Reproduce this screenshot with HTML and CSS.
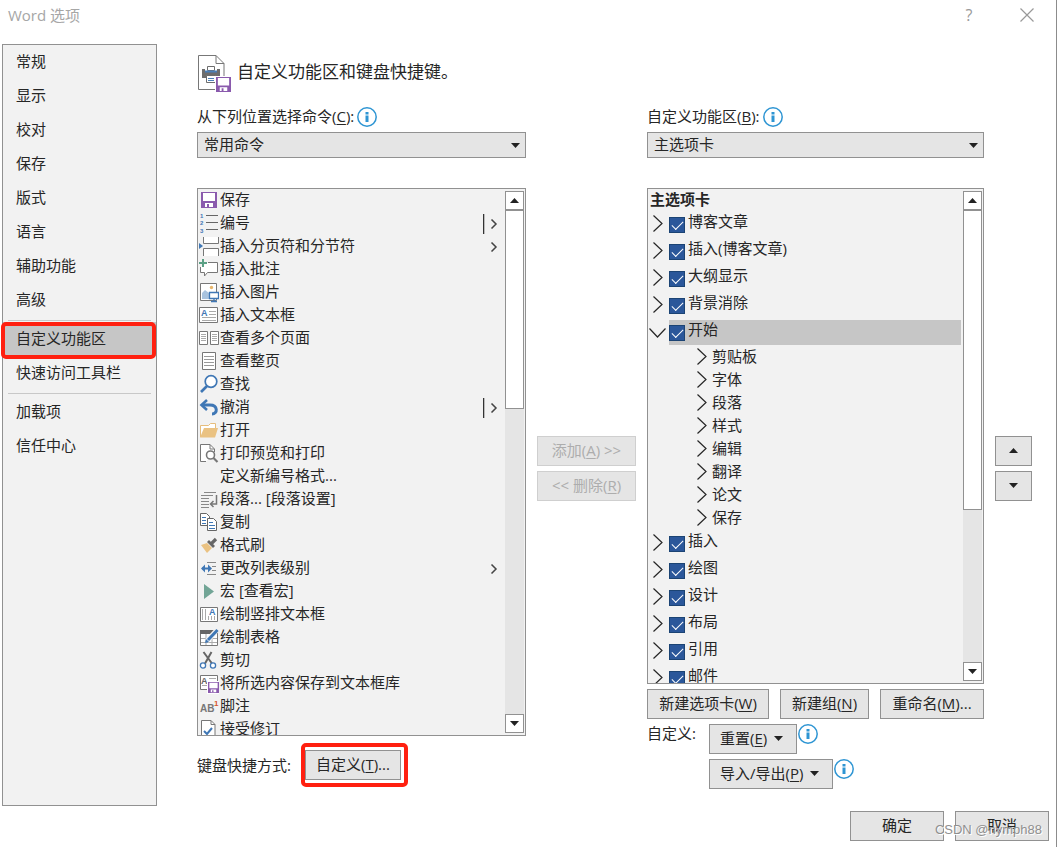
FILE: index.html
```html
<!DOCTYPE html>
<html lang="zh-CN">
<head>
<meta charset="utf-8">
<title>Word 选项</title>
<link rel="stylesheet" href="styles.css">
</head>
<body>
<svg class="sprite" aria-hidden="true">
  <symbol id="save" viewBox="0 0 16 16"><path fill="#8a5aad" d="M0 0h16v16H0z"/><path fill="#fff" d="M2 1h12v8H2zM4 11h8v4H4z"/><path fill="#8a5aad" d="M6 12h2v3H6z"/></symbol>
  <symbol id="info" viewBox="0 0 20 20"><circle cx="10" cy="10" r="9.2" fill="#fff" stroke="#2e95d3" stroke-width="1.5"/><path fill="#2e95d3" d="M8.5 5h3v2.4h-3zM8.5 8.6h3V15h-3z"/></symbol>
  <symbol id="more" viewBox="0 0 8 10"><path d="M1.5.5 6 5 1.5 9.500" fill="none" stroke="#444" stroke-width="1.5"/></symbol>
  <symbol id="closed" viewBox="0 0 10 17"><path d="M.5.5 9 8.500.5 16.500" fill="none" stroke="#262626" stroke-width="1.2"/></symbol>
  <symbol id="open" viewBox="0 0 17 10"><path d="M.5.5 8.500 9 16.500.5" fill="none" stroke="#262626" stroke-width="1.2"/></symbol>
  <symbol id="down" viewBox="0 0 9 5"><path d="M0 0h9L4.500 5z" fill="#222"/></symbol>
  <symbol id="up" viewBox="0 0 9 5"><path d="M0 5h9L4.500 0z" fill="#222"/></symbol>
</svg>
<div class="dialog">
  <header class="titlebar">
    <h1 class="title">Word 选项</h1>
    <button class="tool help" aria-label="帮助">?</button>
    <button class="tool close" aria-label="关闭"><svg width="14" height="14" viewBox="0 0 14 14"><path d="M.5.5l13 13M13.500.5l-13 13" stroke="#999" stroke-width="1.2"/></svg></button>
  </header>
  <div class="body">
    <nav class="sidebar">
      <button class="nav">常规</button>
      <button class="nav">显示</button>
      <button class="nav">校对</button>
      <button class="nav">保存</button>
      <button class="nav">版式</button>
      <button class="nav">语言</button>
      <button class="nav">辅助功能</button>
      <button class="nav">高级</button>
      <hr class="rule">
      <button class="nav current">自定义功能区</button>
      <button class="nav">快速访问工具栏</button>
      <hr class="rule">
      <button class="nav">加载项</button>
      <button class="nav">信任中心</button>
    </nav>
    <main class="main">
      <div class="heading">
        <svg width="34" height="38" viewBox="0 0 34 38">
          <path d="M.5.500H18l8 8V34.500H.500z" fill="#fff" stroke="#777"/><path d="M18 .5v8h8" fill="none" stroke="#777"/>
          <path d="M4 14h3v3h12v-3h3v9H4z" fill="#6d6d6d"/><path d="M9.500 11.500h7v4h-7z" fill="#fff" stroke="#6d6d6d"/><path d="M7 16.500h12" stroke="#4a7fb8" stroke-width="2"/>
          <path d="M8.500 20.500h9v7h-9z" fill="#fff" stroke="#6d6d6d"/><path d="M10 23.500h6M10 25.500h6" stroke="#4a7fb8"/>
          <path d="M17 21h17v17H17z" fill="#fff"/><use href="#save" x="18" y="22" width="15" height="15"/>
        </svg>
        <h2 class="heading-text">自定义功能区和键盘快捷键。</h2>
      </div>
      <div class="columns">
        <section class="col">
          <div class="field"><label for="from">从下列位置选择命令(<u>C</u>):</label><svg class="info"><use href="#info"/></svg></div>
          <div class="select"><select id="from"><option>常用命令</option></select><svg class="tri"><use href="#down"/></svg></div>
          <div class="list">
            <ul class="items">
              <li class="cmd"><svg class="ico" viewBox="0 0 20 21"><use href="#save" x="2" y="2" width="16" height="16"/></svg>保存</li>
              <li class="cmd"><svg class="ico" viewBox="0 0 20 21"><path d="M7 2.500h12M7 9.500h12M7 16.500h12" stroke="#666"/><g class="digits"><text x="1" y="5">1</text><text x="1" y="12">2</text><text x="1" y="20">3</text></g></svg>编号<span class="split"></span><svg class="more"><use href="#more"/></svg></li>
              <li class="cmd"><svg class="ico" viewBox="0 0 20 21"><path d="M4.500 1v6.500h15V1M4.500 20v-7.500h15V20" fill="#fff" stroke="#777"/><path d="M0 7l4 3-4 3z" fill="#3f77b5"/></svg>插入分页符和分节符<svg class="more"><use href="#more"/></svg></li>
              <li class="cmd"><svg class="ico" viewBox="0 0 20 21"><path d="M9 3.500h9.500v10H8.500l-3 3.500v-3.500h-4V8" fill="#fff" stroke="#777"/><path d="M4 0v8M0 4h8" stroke="#5ba085" stroke-width="2"/></svg>插入批注</li>
              <li class="cmd"><svg class="ico" viewBox="0 0 20 21"><path d="M1.500 1.500h16v17h-16z" fill="#fff" stroke="#777"/><path d="M3 17v-6l3-3 4 3v6z" fill="#a9c3de"/><circle cx="12.500" cy="5.500" r="1.700" fill="#e8b66b"/><path d="M10.500 10.500h9v6h-9zM15 16.500v3M12 19.500h6" fill="#fff" stroke="#3f77b5" stroke-width="1.300"/></svg>插入图片</li>
              <li class="cmd"><svg class="ico" viewBox="0 0 20 21"><path d="M.5 2.500h18v15H.500z" fill="#fff" stroke="#777"/><path d="M10 6.500h7M10 9.500h7M3 12.500h14M3 15.500h14" stroke="#aaa"/><text class="glyph blue" x="2" y="11">A</text></svg>插入文本框</li>
              <li class="cmd"><svg class="ico" viewBox="0 0 20 21"><path d="M.5 3.500h8v13h-8zM11.500 3.500h8v13h-8z" fill="#fff" stroke="#777"/><path d="M2 6.500h5M2 8.500h5M2 10.500h5M2 12.500h5M13 6.500h5M13 8.500h5M13 10.500h5M13 12.500h5" stroke="#aaa"/></svg>查看多个页面</li>
              <li class="cmd"><svg class="ico" viewBox="0 0 20 21"><path d="M3.500 1.500h13v17h-13z" fill="#fff" stroke="#777"/><path d="M5 5.500h10M5 8.500h10M5 11.500h10M5 14.500h10" stroke="#999"/></svg>查看整页</li>
              <li class="cmd"><svg class="ico" viewBox="0 0 20 21"><circle cx="12" cy="7.500" r="5.800" fill="#fff" stroke="#3f77b5" stroke-width="1.700"/><path d="M8 12l-6 6" stroke="#3f77b5" stroke-width="2.600"/></svg>查找</li>
              <li class="cmd"><svg class="ico" viewBox="0 0 20 21"><path d="M3 8h8c8 0 8 9 2 9" fill="none" stroke="#3f77b5" stroke-width="3"/><path d="M8 3L2.500 8 8 13" fill="none" stroke="#3f77b5" stroke-width="2.600"/></svg>撤消<span class="split"></span><svg class="more"><use href="#more"/></svg></li>
              <li class="cmd"><svg class="ico" viewBox="0 0 20 21"><path d="M1.500 17V5.500h8l2-2h5V8" fill="#fff" stroke="#e6bd7c"/><path d="M1 17.500L5 8h14l-3 9.500z" fill="#eac282"/></svg>打开</li>
              <li class="cmd"><svg class="ico" viewBox="0 0 20 21"><path d="M7 18.500H1.500v-17H11l4.500 4.500v3" fill="#fff" stroke="#777"/><path d="M11 1.500V6h4" fill="none" stroke="#777"/><circle cx="11.500" cy="12" r="4" fill="#fff" stroke="#777" stroke-width="1.600"/><path d="M14.500 15l4 4" stroke="#777" stroke-width="2.200"/></svg>打印预览和打印</li>
              <li class="cmd"><span class="ico"></span>定义新编号格式...</li>
              <li class="cmd"><svg class="ico" viewBox="0 0 20 21"><path d="M5 3.500h12M2 6.500h12M2 9.500h8M2 12.500h8M2 15.500h8M2 18.500h8" stroke="#888"/><path d="M17.500 6v9h-6M14.500 12l-3 3 3 3" fill="none" stroke="#777" stroke-width="1.500"/></svg>段落... [段落设置]</li>
              <li class="cmd"><svg class="ico" viewBox="0 0 20 21"><path d="M1.500 1.500h6l3 3v9h-9z" fill="#fff" stroke="#666"/><path d="M3 5.500h4M3 8.500h4M3 11.500h4" stroke="#3f77b5"/><path d="M8.500 6.500h6l3 3v9h-9z" fill="#fff" stroke="#666"/><path d="M10 10.500h4M10 13.500h6M10 16.500h6" stroke="#3f77b5"/></svg>复制</li>
              <li class="cmd"><svg class="ico" viewBox="0 0 20 21"><path d="M2 10l6-2 5 5-5 5z" fill="#eac282"/><path d="M8 7l2-2 6 6-2 2z" fill="#666"/><path d="M12 9l5-5" stroke="#666" stroke-width="3.200"/></svg>格式刷</li>
              <li class="cmd"><svg class="ico" viewBox="0 0 20 21"><path d="M8 4.500h9M13 8.500h4M13 12.500h4M8 16.500h9" stroke="#888"/><path d="M3 10.500h8" stroke="#3f77b5" stroke-width="2"/><path d="M6 6.500l-4 4 4 4zM9 6.500l4 4-4 4z" fill="#3f77b5"/></svg>更改列表级别<svg class="more"><use href="#more"/></svg></li>
              <li class="cmd"><svg class="ico" viewBox="0 0 20 21"><path d="M5 3l10 7.500L5 18z" fill="#72a596"/></svg>宏 [查看宏]</li>
              <li class="cmd"><svg class="ico" viewBox="0 0 20 21"><path d="M1.500 3.500h17v14h-17z" fill="#fff" stroke="#777"/><path d="M3.500 5v11M6.500 5v11M9.500 12v4M12.500 12v4M15.500 12v4" stroke="#aaa"/><text class="glyph blue" x="10" y="11">A</text></svg>绘制竖排文本框</li>
              <li class="cmd"><svg class="ico" viewBox="0 0 20 21"><path d="M1.500 3.500h17v15h-17z" fill="#fff" stroke="#777"/><path d="M1 3h18v4H1z" fill="#666"/><path d="M7 7v11M13 7v11M2 11.500h16M2 15.500h16" stroke="#aaa"/><path d="M8 14L18 3" stroke="#f3f3f3" stroke-width="5"/><path d="M9 13L18.500 3" stroke="#3f77b5" stroke-width="3"/><path d="M6 16l1-4 3 3z" fill="#3f77b5"/></svg>绘制表格</li>
              <li class="cmd"><svg class="ico" viewBox="0 0 20 21"><path d="M4.500 2L13 13.500M12.500 2L6 13.500" stroke="#666" stroke-width="2"/><circle cx="4" cy="15.500" r="2.600" fill="#fff" stroke="#3f77b5" stroke-width="1.300"/><circle cx="14" cy="15.500" r="2.600" fill="#fff" stroke="#3f77b5" stroke-width="1.300"/></svg>剪切</li>
              <li class="cmd"><svg class="ico" viewBox="0 0 20 21"><path d="M1.500 2.500h17v14h-17z" fill="#fff" stroke="#777"/><path d="M10 5.500h7M10 8.500h7M3 12.500h14" stroke="#aaa"/><text class="glyph gray" x="2" y="11">A</text><path d="M8 8h12v13H8z" fill="#fff"/><use href="#save" x="9" y="9" width="11" height="11"/></svg>将所选内容保存到文本框库</li>
              <li class="cmd"><svg class="ico" viewBox="0 0 20 21"><text class="ab" x="1" y="16">AB</text><text class="one" x="15" y="10">1</text></svg>脚注</li>
              <li class="cmd"><svg class="ico" viewBox="0 0 20 21"><path d="M2.500 1.500H12l4 4v14H2.500z" fill="#fff" stroke="#777"/><path d="M12 1.500v4h4" fill="none" stroke="#777"/><path d="M5 12l3 3 5-6" fill="none" stroke="#3f77b5" stroke-width="2"/></svg>接受修订</li>
            </ul>
            <div class="scroll"><button class="sbtn" aria-label="向上"><svg class="tri"><use href="#up"/></svg></button><div class="track"><div class="thumb commands"></div></div><button class="sbtn" aria-label="向下"><svg class="tri"><use href="#down"/></svg></button></div>
          </div>
          <div class="shortcut"><span>键盘快捷方式:</span><span class="marked"><button class="btn">自定义(<u>T</u>)...</button></span></div>
        </section>
        <div class="stack transfer">
          <button class="btn" disabled>添加(<u>A</u>) &gt;&gt;</button>
          <button class="btn" disabled>&lt;&lt; 删除(<u>R</u>)</button>
        </div>
        <section class="col">
          <div class="field"><label for="tabs">自定义功能区(<u>B</u>):</label><svg class="info"><use href="#info"/></svg></div>
          <div class="select"><select id="tabs"><option>主选项卡</option></select><svg class="tri"><use href="#down"/></svg></div>
          <div class="list">
            <div class="items tree">
              <div class="tree-title">主选项卡</div>
              <div class="tab"><svg class="chev"><use href="#closed"/></svg><label class="check"><input type="checkbox" checked>博客文章</label></div>
              <div class="tab"><svg class="chev"><use href="#closed"/></svg><label class="check"><input type="checkbox" checked>插入(博客文章)</label></div>
              <div class="tab"><svg class="chev"><use href="#closed"/></svg><label class="check"><input type="checkbox" checked>大纲显示</label></div>
              <div class="tab"><svg class="chev"><use href="#closed"/></svg><label class="check"><input type="checkbox" checked>背景消除</label></div>
              <div class="tab"><svg class="chev opened"><use href="#open"/></svg><label class="check selected"><input type="checkbox" checked>开始</label></div>
              <div class="group"><svg class="chev"><use href="#closed"/></svg>剪贴板</div>
              <div class="group"><svg class="chev"><use href="#closed"/></svg>字体</div>
              <div class="group"><svg class="chev"><use href="#closed"/></svg>段落</div>
              <div class="group"><svg class="chev"><use href="#closed"/></svg>样式</div>
              <div class="group"><svg class="chev"><use href="#closed"/></svg>编辑</div>
              <div class="group"><svg class="chev"><use href="#closed"/></svg>翻译</div>
              <div class="group"><svg class="chev"><use href="#closed"/></svg>论文</div>
              <div class="group"><svg class="chev"><use href="#closed"/></svg>保存</div>
              <div class="tab"><svg class="chev"><use href="#closed"/></svg><label class="check"><input type="checkbox" checked>插入</label></div>
              <div class="tab"><svg class="chev"><use href="#closed"/></svg><label class="check"><input type="checkbox" checked>绘图</label></div>
              <div class="tab"><svg class="chev"><use href="#closed"/></svg><label class="check"><input type="checkbox" checked>设计</label></div>
              <div class="tab"><svg class="chev"><use href="#closed"/></svg><label class="check"><input type="checkbox" checked>布局</label></div>
              <div class="tab"><svg class="chev"><use href="#closed"/></svg><label class="check"><input type="checkbox" checked>引用</label></div>
              <div class="tab"><svg class="chev"><use href="#closed"/></svg><label class="check"><input type="checkbox" checked>邮件</label></div>
            </div>
            <div class="scroll"><button class="sbtn" aria-label="向上"><svg class="tri"><use href="#up"/></svg></button><div class="track"><div class="thumb tabs"></div></div><button class="sbtn" aria-label="向下"><svg class="tri"><use href="#down"/></svg></button></div>
          </div>
          <div class="actions">
            <button class="btn">新建选项卡(<u>W</u>)</button>
            <button class="btn">新建组(<u>N</u>)</button>
            <button class="btn">重命名(<u>M</u>)...</button>
          </div>
          <div class="custom">
            <span class="custom-label">自定义:</span>
            <div class="custom-buttons">
              <div class="menu"><button class="btn"><span>重置(<u>E</u>)</span><svg class="tri"><use href="#down"/></svg></button><svg class="info"><use href="#info"/></svg></div>
              <div class="menu"><button class="btn"><span>导入/导出(<u>P</u>)</span><svg class="tri"><use href="#down"/></svg></button><svg class="info"><use href="#info"/></svg></div>
            </div>
          </div>
        </section>
        <div class="stack">
          <button class="btn" aria-label="上移"><svg class="tri"><use href="#up"/></svg></button>
          <button class="btn" aria-label="下移"><svg class="tri"><use href="#down"/></svg></button>
        </div>
      </div>
    </main>
  </div>
  <footer class="footer">
    <button class="btn">确定</button>
    <button class="btn">取消</button>
    <span class="watermark">CSDN @nymph88</span>
  </footer>
</div>
</body>
</html>
```
FILE: styles.css
```css
* { box-sizing: border-box; }
body { margin: 0; background: #fff; color: #262626; font: 15px/23px "Open Sans", "Noto Sans CJK SC", sans-serif; }
button, select, input { font: inherit; color: inherit; margin: 0; }
h1, h2, ul { margin: 0; padding: 0; font-weight: 400; list-style: none; }
svg { display: block; flex: none; }
u { text-underline-offset: 2px; text-decoration-thickness: 1px; }
.sprite { position: absolute; width: 0; height: 0; }

.dialog { display: flex; flex-direction: column; height: 100vh; min-height: 640px; padding-bottom: 6px; border-right: 1px solid #8c8c8c; }
.titlebar { display: flex; align-items: center; height: 44px; padding: 0 22px 14px 8px; }
.title { flex: 1; font-size: 15px; color: #a6a6a6; }
.tool { display: flex; align-items: center; justify-content: center; padding: 0; border: 0; background: none; color: #999; }
.help { width: 20px; margin-right: 41px; font-size: 16px; }

.body { display: flex; flex: 1; min-height: 0; padding-left: 2px; }
.sidebar { flex: none; width: 155px; border: 1px solid #919191; background: #f2f2f2; }
.nav { display: block; position: relative; width: 100%; height: 34px; padding: 0 13px 2px; border: 0; background: none; text-align: left; }
.rule { height: 1px; margin: 3px 5px 1px; border: 0; background: #c8c8c8; }
.current { background: #c6c6c6; }
.current::after, .marked::after { content: ""; position: absolute; border: 4px solid #ff2010; border-radius: 5px; pointer-events: none; }
.current::after { inset: 0 0 -3px -2px; }

.main { display: flex; flex-direction: column; flex: 1; min-width: 0; padding: 10px 24px 0 40px; }
.heading { display: flex; align-items: flex-start; gap: 5px; height: 53px; padding: 1px; }
.heading-text { font-size: 17px; line-height: 34px; }
.columns { display: grid; grid-template-columns: 329fr 99px 337fr 37px; gap: 11px; flex: 1; min-height: 0; }
.col { display: flex; flex-direction: column; min-width: 0; min-height: 0; }
.field { display: flex; align-items: center; gap: 3px; height: 20px; margin-bottom: 5px; }
.field label { padding-bottom: 2px; }
.info { width: 20px; height: 20px; overflow: visible; }
.tri { width: 9px; height: 5px; }
.select { display: grid; align-items: center; flex: none; height: 26px; margin-bottom: 30px; }
.select select { grid-area: 1 / 1; width: 100%; height: 26px; padding: 0 6px 2px; border: 1px solid #919191; border-radius: 0; background: #e5e5e5; appearance: none; line-height: 22px; }
.select .tri { grid-area: 1 / 1; justify-self: end; margin-right: 6px; pointer-events: none; }

.list { display: flex; flex: 1; min-height: 0; border: 1px solid #919191; background: #f2f2f2; }
.items { flex: 1; min-width: 0; overflow: hidden; }
.cmd { display: flex; height: 23px; padding: 0 7px 0 1px; line-height: 21px; white-space: nowrap; }
.ico { width: 20px; height: 21px; margin: 1px 1px 0 0; }
.more { align-self: center; width: 8px; height: 10px; margin-left: auto; }
.split { align-self: center; width: 2px; height: 20px; margin-left: auto; border-left: 1px solid #333; background: #bbb; }
.split + .more { margin-left: 5px; }
.digits { font: bold 6px "Liberation Sans", sans-serif; fill: #3f77b5; }
.glyph { font: bold 9px "Liberation Sans", sans-serif; }
.blue { fill: #3f77b5; }
.gray { fill: #666; }
.ab { font: bold 10px "Liberation Sans", sans-serif; fill: #777; }
.one { font: bold 8px "Liberation Sans", sans-serif; fill: #d8552f; }

.scroll { display: flex; flex-direction: column; width: 19px; margin: 2px 1px 2px 0; background: #e5e5e5; }
.sbtn { display: flex; align-items: center; justify-content: center; flex: none; height: 19px; padding: 0; border: 1px solid #919191; background: #fff; }
.track { flex: 1; min-height: 0; }
.thumb { border: 1px solid #919191; background: #fff; }
.commands { height: 39.5%; }
.tabs { height: 66.3%; }

.shortcut { display: flex; align-items: center; gap: 14px; height: 30px; margin: 14px 0 26px; }
.marked { display: flex; position: relative; }
.marked::after { inset: -7px -7px -7px -4px; }
.btn { display: inline-flex; align-items: center; justify-content: center; height: 30px; padding: 0 10px 2px; border: 1px solid #919191; background: #e5e5e5; white-space: pre; }
.btn:disabled { color: #adadad; border-color: #cfcfcf; }
.stack { display: flex; flex-direction: column; gap: 5px; justify-content: center; padding-top: 24px; }
.stack .btn { padding: 0 0 1px; }

.tree-title { height: 21px; padding-left: 2px; line-height: 21px; font-weight: 700; }
.tab { display: flex; height: 25px; margin: 2px 2px 0 0; }
.chev { width: 10px; height: 17px; }
.tab .chev { margin: 3px 6px 0 5px; }
.tab .opened { width: 17px; height: 10px; margin: 8px 3px 0 1px; }
.check { display: flex; flex: 1; gap: 3px; line-height: 19px; }
.check input { appearance: none; flex: none; width: 16px; height: 16px; margin-top: 5px; border: 1px solid #1c4474; background: #2b579a; display: grid; place-items: center; }
.check input:checked::before { content: ""; width: 10px; height: 5px; margin-bottom: 2px; border: solid #fff; border-width: 0 0 1px 1px; rotate: -45deg; }
.selected { background: #c6c6c6; }
.group { display: flex; align-items: center; gap: 5px; height: 23px; padding-left: 49px; }

.actions { display: grid; grid-template-columns: 122fr 89fr 104fr; gap: 11px; margin: 5px 0; }
.actions .btn { padding: 0 0 2px; }
.custom { display: flex; margin-bottom: 17px; }
.custom-label { width: 62px; line-height: 19px; }
.custom-buttons { display: flex; flex-direction: column; gap: 5px; }
.menu { display: flex; gap: 1px; }
.menu .btn { gap: 7px; padding-right: 13px; }

.footer { display: flex; position: relative; justify-content: flex-end; gap: 11px; margin-top: 5px; padding-right: 7px; }
.footer .btn { width: 94px; }
.watermark { position: absolute; right: 14px; bottom: 1px; font: 13px/20px "Liberation Sans", sans-serif; color: #8f8f8f; text-shadow: 1px 1px #fff; }
```
